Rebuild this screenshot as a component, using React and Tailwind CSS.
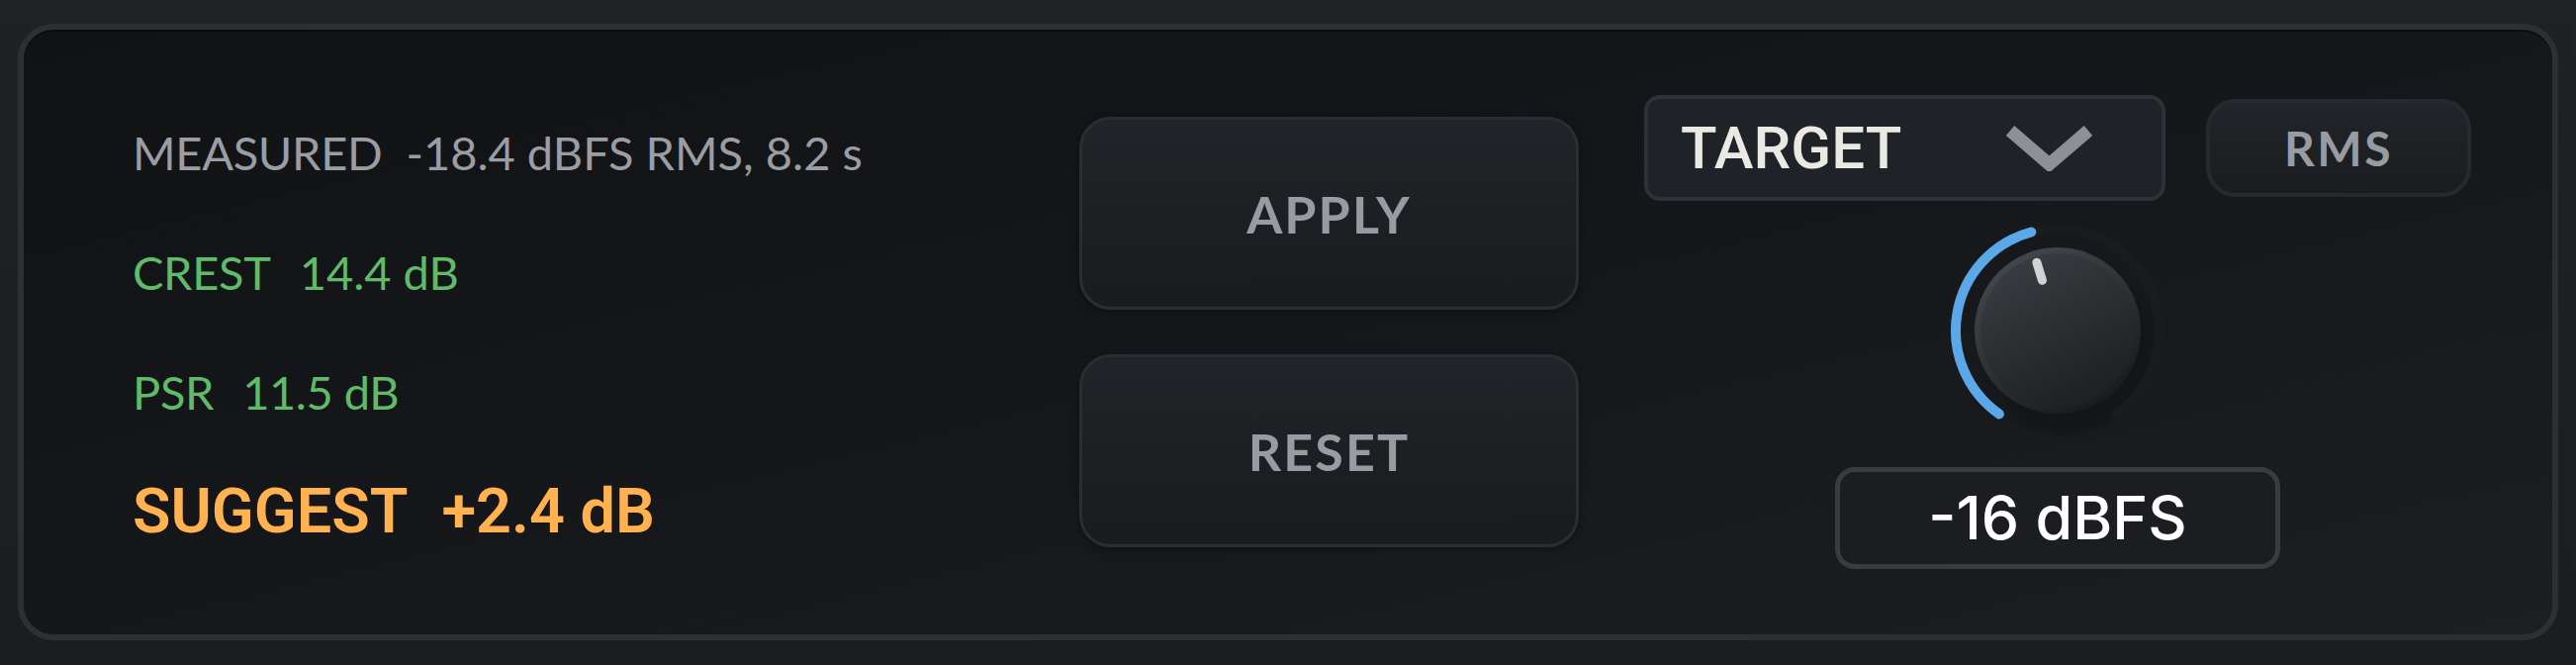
export default function App() {
    return (
        <div className="w-[2604px] h-[672px] pl-[18px] pt-[24px] bg-gradient-to-b from-[#1f2125] to-[#1b1d20]">
            {/* panel */}
            <div className="w-[2568px] h-[623px] rounded-[36px] border-[6px] border-[#2c2f34] bg-gradient-to-br from-[#111214] via-[#16171a] to-[#1c1e21] pl-[110px] flex items-center shadow-[inset_0_2px_0_rgba(0,0,0,0.4)]">
                {/* readouts */}
                <div className="w-[957px] flex flex-col font-['Lato',sans-serif] tracking-[-0.02em]">
                    <div className="h-[121px] flex items-center text-[47px] text-[#9a9da3]">
                        <span>MEASURED</span>
                        <span className="ml-[24px] tracking-normal">-18.4 dBFS RMS, 8.2 s</span>
                    </div>
                    <div className="h-[121px] flex items-center text-[47px] text-[#5fba69]">
                        <span>CREST</span>
                        <span className="ml-[29px] tracking-normal">14.4 dB</span>
                    </div>
                    <div className="h-[121px] flex items-center text-[47px] text-[#5fba69]">
                        <span>PSR</span>
                        <span className="ml-[29px] tracking-[-0.01em]">11.5 dB</span>
                    </div>
                    <div className="h-[121px] flex items-center text-[63px] font-semibold tracking-normal text-[#ffb24f] font-['Roboto',sans-serif]">
                        <span>SUGGEST</span>
                        <span className="ml-[34px]">+2.4 dB</span>
                    </div>
                </div>

                {/* actions */}
                <div className="w-[505px] flex flex-col gap-[45px]">
                    <button className="h-[195px] rounded-[32px] border-[3px] border-[#2a2d31] bg-gradient-to-b from-[#212428] to-[#191b1e] text-[52px] font-bold tracking-[0.04em] text-[#989ca2] font-['Lato',sans-serif] shadow-[0_2px_8px_rgba(0,0,0,0.35)]">
                        APPLY
                    </button>
                    <button className="h-[195px] rounded-[32px] border-[3px] border-[#2a2d31] bg-gradient-to-b from-[#212428] to-[#191b1e] text-[52px] font-bold tracking-[0.04em] text-[#989ca2] font-['Lato',sans-serif] shadow-[0_2px_8px_rgba(0,0,0,0.35)]">
                        RESET
                    </button>
                </div>

                {/* target */}
                <div className="ml-[66px] w-[836px] flex flex-col items-center">
                    <div className="w-full flex items-center gap-[41px]">
                        <div className="w-[527px] h-[107px] rounded-[16px] border-[4px] border-[#2e3135] bg-[#1f2226] flex items-center pl-[33px]">
                            <span className="text-[60px] font-medium text-[#ebe9e4] font-['Roboto',sans-serif] leading-none">
                                TARGET
                            </span>
                            <svg
                                className="ml-auto mr-[70px]"
                                width="87"
                                height="46"
                                viewBox="0 0 87 46"
                            >
                                <polyline
                                    points="4,5 43.5,39 83,5"
                                    fill="none"
                                    stroke="#8d9197"
                                    strokeWidth="13"
                                    strokeLinejoin="miter"
                                />
                            </svg>
                        </div>
                        <div className="w-[268px] h-[99px] rounded-[30px] border-[4px] border-[#26292d] bg-gradient-to-b from-[#222529] to-[#1a1c1f] flex items-center justify-center text-[48px] font-bold tracking-[0.05em] text-[#989ca2] font-['Lato',sans-serif]">
                            RMS
                        </div>
                    </div>

                    {/* knob */}
                    <svg className="mt-[1px]" width="260" height="260" viewBox="0 0 260 260">
                        <defs>
                            <linearGradient id="ring" x1="0" y1="0" x2="0.6" y2="1">
                                <stop offset="0" stopColor="#4a4d52" />
                                <stop offset="1" stopColor="#1b1c1f" />
                            </linearGradient>
                            <linearGradient id="cap" x1="0.2" y1="0" x2="0.7" y2="1">
                                <stop offset="0" stopColor="#3a3d41" />
                                <stop offset="1" stopColor="#1d1f22" />
                            </linearGradient>
                            <radialGradient id="halo" cx="0.55" cy="0.58" r="0.5">
                                <stop offset="0.75" stopColor="#0e0f10" stopOpacity="0.45" />
                                <stop offset="1" stopColor="#0e0f10" stopOpacity="0" />
                            </radialGradient>
                        </defs>
                        <circle cx="134" cy="136" r="100" fill="url(#halo)" />
                        <path
                            d="M 70.92 214.38 A 103 103 0 1 1 189.08 214.38"
                            fill="none"
                            stroke="#1a1b1e"
                            strokeWidth="10"
                            strokeLinecap="round"
                        />
                        <path
                            d="M 70.92 214.38 A 103 103 0 0 1 103.34 30.51"
                            fill="none"
                            stroke="#5ba8e8"
                            strokeWidth="10"
                            strokeLinecap="round"
                        />
                        <circle cx="130" cy="130" r="84" fill="url(#ring)" />
                        <circle cx="130" cy="130" r="78" fill="url(#cap)" />
                        <line
                            x1="108.9"
                            y1="61.2"
                            x2="114.5"
                            y2="79.3"
                            stroke="#d2d2d2"
                            strokeWidth="9"
                            strokeLinecap="round"
                        />
                    </svg>

                    <div className="mt-[8px] w-[450px] h-[103px] rounded-[20px] border-[5px] border-[#383b40] bg-[#1b1d20] flex items-center justify-center text-[61px] font-medium text-white font-['Inter',sans-serif]">
                        -16 dBFS
                    </div>
                </div>
            </div>
        </div>
    );
}
